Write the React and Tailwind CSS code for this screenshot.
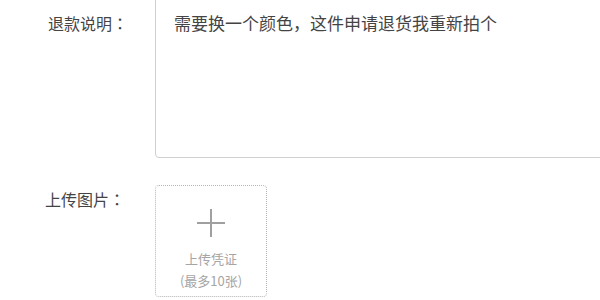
export default function App() {
  return (
    <div
      className="w-[600px] h-[300px] overflow-hidden bg-white text-[#333]"
      style={{ fontFamily: '"Noto Sans CJK SC", "Liberation Sans", sans-serif' }}>
      <div className="-mt-[12px] flex flex-col gap-[27px]">
        <div className="flex">
          <div className="w-[155px] shrink-0 pl-[48px] pt-[23px] text-[16px] leading-[24px] text-[#444]">
            退款说明<span style={{ fontFamily: '"Noto Sans CJK JP", sans-serif' }}>：</span>
          </div>
          <div className="w-[460px] shrink-0 h-[170px] border border-[#d0d0d0] rounded-[4px] pl-[18px] pt-[21px] text-[17px] leading-[26px] text-[#444]">
            需要换一个颜色，这件申请退货我重新拍个
          </div>
        </div>
        <div className="flex">
          <div className="w-[155px] shrink-0 pl-[45px] pt-[2px] text-[16px] leading-[24px] text-[#444]">
            上传图片<span style={{ fontFamily: '"Noto Sans CJK JP", sans-serif' }}>：</span>
          </div>
          <div className="w-[112px] h-[112px] border border-dotted border-[#b5b5b5] rounded-[4px] flex flex-col items-center pt-[22px]">
            <svg width="30" height="30" viewBox="0 0 30 30">
              <path d="M15 1v28M1 15h28" stroke="#a0a0a0" strokeWidth="2" />
            </svg>
            <div className="mt-[10px] text-[13px] leading-[22px] text-[#a5a5a5] text-center">
              上传凭证
              <br />
              (最多10张)
            </div>
          </div>
        </div>
      </div>
    </div>
  );
}
